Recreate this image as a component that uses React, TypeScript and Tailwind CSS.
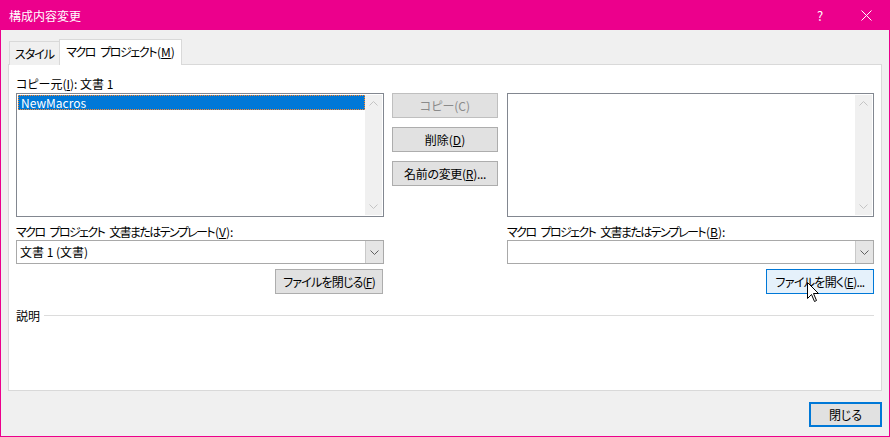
import React from 'react';

const Chevron = ({ dir, color }: { dir: 'up' | 'down'; color: string }) => (
  <svg width="9" height="5" viewBox="0 0 9 5">
    <path
      d={dir === 'up' ? 'M0.5 4.5 L4.5 0.5 L8.5 4.5' : 'M0.5 0.5 L4.5 4.5 L8.5 0.5'}
      stroke={color}
      strokeWidth="1"
      fill="none"
    />
  </svg>
);

const Btn = ({ children, className = '' }: { children: React.ReactNode; className?: string }) => (
  <div className={`flex items-center justify-center h-[25px] border text-[12px] leading-none ${className}`}>
    {children}
  </div>
);

const Gap = () => <span className="inline-block w-[5px]" />;

// list box with a disabled vertical scrollbar
const ListBox = ({ width, children }: { width: string; children?: React.ReactNode }) => (
  <div className={`${width} h-[124px] border border-[#828790] bg-white p-px flex`}>
    <div className="flex-1 min-w-0">{children}</div>
    <div className="w-[17px] bg-[#f0f0f0] flex flex-col justify-between">
      <div className="h-[17px] flex items-center justify-center">
        <Chevron dir="up" color="#c4c4c4" />
      </div>
      <div className="h-[17px] flex items-center justify-center">
        <Chevron dir="down" color="#c4c4c4" />
      </div>
    </div>
  </div>
);

const Combo = ({ width, value }: { width: string; value?: string }) => (
  <div className={`${width} h-[24px] border border-[#a9a9a9] bg-white flex`}>
    <div className="flex-1 flex items-center pl-[3px] text-[12px] text-black">{value}</div>
    <div className="w-[18px] bg-[#e5e5e5] border-l border-[#c9c9c9] flex items-center justify-center">
      <Chevron dir="down" color="#606060" />
    </div>
  </div>
);

const ProjectLabel = ({ hotkey }: { hotkey: string }) => (
  <div className="mt-[7px] h-[15px] leading-[15px]">
    <span className="tracking-[-1.6px]">
      マクロ<Gap />プロジェクト<Gap />文書またはテンプレート
    </span>
    <span className="ml-[1px]">
      (<span className="underline">{hotkey}</span>):
    </span>
  </div>
);

export default function App() {
  return (
    <div className="relative w-[890px] h-[437px] border border-[#ec008c] bg-[#f0f0f0] flex flex-col font-['Noto_Sans_CJK_JP',sans-serif] [font-feature-settings:'palt'] text-[12px] text-black select-none overflow-hidden">
      {/* Title bar */}
      <div className="h-[29px] bg-[#ec008c] flex items-center text-white shrink-0">
        <span className="pl-[8px] text-[12px]">構成内容変更</span>
        <div className="flex-1" />
        <span className="text-[13px] w-[20px] text-center mr-[31px]">?</span>
        <svg width="11" height="11" viewBox="0 0 11 11" className="mr-[17px]">
          <path d="M0.5 0.5 L10.5 10.5 M10.5 0.5 L0.5 10.5" stroke="white" strokeWidth="1" />
        </svg>
      </div>

      <div className="px-[7px] flex flex-col flex-1">
        {/* Tabs */}
        <div className="mt-[9px] flex items-end h-[26px] -mb-px relative z-10">
          <div className="ml-px h-[24px] w-[51px] border border-b-0 border-[#d9d9d9] bg-[#f0f0f0] flex items-center justify-center tracking-[-1px]">
            スタイル
          </div>
          <div className="h-[26px] w-[123px] -ml-px border border-b-0 border-[#d9d9d9] bg-white flex items-center justify-center pb-[1px]">
            <span className="tracking-[-1.4px]">
              マクロ<Gap />プロジェクト
            </span>
            <span className="ml-[1px]">
              (<span className="underline">M</span>)
            </span>
          </div>
        </div>

        {/* Tab panel */}
        <div className="h-[327px] border border-[#d9d9d9] bg-white px-[7px] flex flex-col">
          <div className="flex items-start mt-[11px]">
            <div className="w-[368px] flex flex-col">
              <div className="h-[15px] leading-[15px]">
                コピー元(<span className="underline">I</span>): 文書 1
              </div>
              <div className="mt-[2px]">
                <ListBox width="w-[368px]">
                  <div className="h-[15px] border border-dotted border-[#ff8728] bg-[#0078d7] text-white leading-[13px] pl-[2px]">
                    NewMacros
                  </div>
                </ListBox>
              </div>
            </div>

            <div className="ml-[8px] w-[106px] pt-[17px] flex flex-col gap-[9px]">
              <Btn className="border-[#bfbfbf] bg-[#e1e1e1] text-[#8a8a8a]">コピー(C)</Btn>
              <Btn className="border-[#adadad] bg-[#e1e1e1]">
                削除(<span className="underline">D</span>)
              </Btn>
              <Btn className="border-[#adadad] bg-[#e1e1e1] tracking-[-0.3px]">
                名前の変更(<span className="underline">R</span>)...
              </Btn>
            </div>

            <div className="ml-[9px] pt-[17px]">
              <ListBox width="w-[367px]" />
            </div>
          </div>

          <div className="flex items-start">
            <div className="w-[368px] flex flex-col">
              <ProjectLabel hotkey="V" />
              <div className="mt-[1px]">
                <Combo width="w-[368px]" value="文書 1 (文書)" />
              </div>
              <div className="mt-[5px] flex justify-end pr-px">
                <Btn className="w-[108px] border-[#adadad] bg-[#e1e1e1] tracking-[-0.8px]">
                  ファイルを閉じる(<span className="underline">F</span>)
                </Btn>
              </div>
            </div>

            <div className="ml-[123px] w-[367px] flex flex-col">
              <ProjectLabel hotkey="B" />
              <div className="mt-[1px]">
                <Combo width="w-[367px]" />
              </div>
              <div className="mt-[5px] flex justify-end">
                <Btn className="w-[108px] border-[#0078d7] bg-[#e5f1fb] tracking-[-0.7px]">
                  ファイルを開く(<span className="underline">E</span>)...
                </Btn>
              </div>
            </div>
          </div>

          {/* 説明 group */}
          <div className="mt-[14px] h-[15px] flex items-center">
            <span className="leading-[15px]">説明</span>
            <div className="ml-[4px] flex-1 h-px bg-[#dcdcdc]" />
          </div>
        </div>

        <div className="mt-[11px] flex justify-end">
          <Btn className="w-[73px] border-2 border-[#0078d7] bg-[#e1e1e1]">閉じる</Btn>
        </div>
      </div>

      {/* mouse pointer */}
      <svg width="13" height="21" viewBox="0 0 13 21" className="absolute left-[806px] top-[281px]">
        <path
          d="M0.5 0.5 L0.5 16.5 L4.5 12.5 L7.5 19.5 L9.5 18.5 L6.5 11.5 L11.5 11.5 Z"
          fill="white"
          stroke="black"
          strokeWidth="1"
          strokeLinejoin="miter"
        />
      </svg>
    </div>
  );
}
